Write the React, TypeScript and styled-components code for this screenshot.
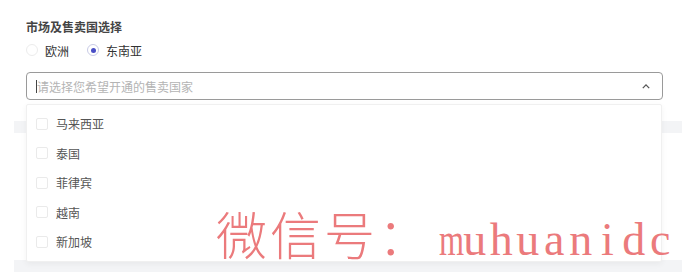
import styled, { createGlobalStyle } from "styled-components";

const GlobalStyle = createGlobalStyle`
  html, body {
    margin: 0;
    padding: 0;
    background: #ffffff;
    font-family: "Noto Sans CJK SC", "Noto Sans", sans-serif;
  }
`;

const countries = ["马来西亚", "泰国", "菲律宾", "越南", "新加坡"];
const wmLatin = "muhuanidc".split("");

function App() {
  return (
    <Page>
      <GlobalStyle />
      <Form>
        <Title>市场及售卖国选择</Title>
        <RadioRow>
          <RadioOption>
            <Radio checked={false} />
            <span>欧洲</span>
          </RadioOption>
          <RadioOption>
            <Radio checked />
            <span>东南亚</span>
          </RadioOption>
        </RadioRow>
        <SelectWrap>
          <SelectBox>
            <Caret />
            <Placeholder>请选择您希望开通的售卖国家</Placeholder>
            <Chevron viewBox="0 0 10 6" width="8" height="5">
              <path d="M1 5 L5 1 L9 5" fill="none" stroke="#555" strokeWidth="1.6" />
            </Chevron>
          </SelectBox>
          <Dropdown>
            {countries.map((name) => (
              <Option key={name}>
                <Checkbox />
                <span>{name}</span>
              </Option>
            ))}
          </Dropdown>
        </SelectWrap>
      </Form>
      <Backdrop>
        <GrayBand />
        <BackdropBody />
        <GrayBand />
      </Backdrop>
      <Watermark>
        <WmCjk>微信号：</WmCjk>
        <WmLatin>
          {wmLatin.map((ch, i) => (
            <WmCell key={i} $wide={ch === "m"}>
              {ch}
            </WmCell>
          ))}
        </WmLatin>
      </Watermark>
    </Page>
  );
}

export default App;

const Page = styled.div`
  position: relative;
  width: 691px;
  height: 273px;
  overflow: hidden;
  background: #fff;
`;

const Form = styled.div`
  padding: 18px 0 0 26px;
  width: 637px;
  display: flex;
  flex-direction: column;
`;

const Title = styled.div`
  font-size: 12px;
  line-height: 18px;
  font-weight: 700;
  color: #454545;
`;

const RadioRow = styled.div`
  display: flex;
  gap: 18px;
  margin-top: 4px;
  height: 20px;
  align-items: center;
`;

const RadioOption = styled.label`
  display: flex;
  align-items: center;
  gap: 7px;
  font-size: 12px;
  color: #333;
`;

const Radio = styled.span<{ checked: boolean }>`
  width: 12px;
  height: 12px;
  border-radius: 50%;
  box-sizing: border-box;
  border: 1px solid ${(p) => (p.checked ? "#c9cbe6" : "#ececec")};
  display: flex;
  align-items: center;
  justify-content: center;
  &::after {
    content: "";
    width: 5px;
    height: 5px;
    border-radius: 50%;
    background: ${(p) => (p.checked ? "#4a4fc6" : "transparent")};
  }
`;

const SelectWrap = styled.div`
  position: relative;
  margin-top: 12px;
`;

const SelectBox = styled.div`
  height: 28px;
  box-sizing: border-box;
  border: 1px solid #9a9a9a;
  border-radius: 4px;
  display: flex;
  align-items: center;
  padding: 0 12px 0 9px;
`;

const Caret = styled.span`
  width: 1px;
  height: 13px;
  background: #444;
`;

const Placeholder = styled.span`
  flex: 1;
  font-size: 12px;
  color: #b4b4b4;
`;

const Chevron = styled.svg`
  display: block;
`;

const Dropdown = styled.div`
  position: absolute;
  top: 32px;
  left: 0;
  right: 1px;
  z-index: 2;
  background: #fff;
  border: 1px solid #f0f0f0;
  border-radius: 2px;
  box-shadow: 0 2px 6px rgba(0, 0, 0, 0.05);
  padding: 4px 0;
`;

const Option = styled.div`
  height: 29.5px;
  display: flex;
  align-items: center;
  gap: 8px;
  padding-left: 9px;
  font-size: 12px;
  color: #555;
`;

const Checkbox = styled.span`
  width: 12px;
  height: 12px;
  box-sizing: border-box;
  border: 1px solid #eaeaea;
  border-radius: 2px;
`;

const Backdrop = styled.div`
  margin: 21px 0 0 14px;
  width: 668px;
  display: flex;
  flex-direction: column;
`;

const GrayBand = styled.div`
  height: 12px;
  background: #f3f4f6;
`;

const BackdropBody = styled.div`
  height: 127px;
  background: #fff;
`;

const Watermark = styled.div`
  position: absolute;
  left: 216px;
  top: 196px;
  z-index: 3;
  display: flex;
  align-items: baseline;
  color: #eb7a7c;
  white-space: nowrap;
  pointer-events: none;
`;

const WmCjk = styled.span`
  font-family: "Noto Sans CJK SC", sans-serif;
  font-size: 51px;
  font-weight: 300;
  letter-spacing: 3px;
`;

const WmLatin = styled.span`
  display: flex;
  font-family: "Liberation Serif", serif;
  font-size: 46px;
  margin-left: 3px;
`;

const WmCell = styled.span<{ $wide: boolean }>`
  display: inline-block;
  width: 26.5px;
  text-align: center;
  transform: ${(p) => (p.$wide ? "scaleX(0.7)" : "none")};
`;
